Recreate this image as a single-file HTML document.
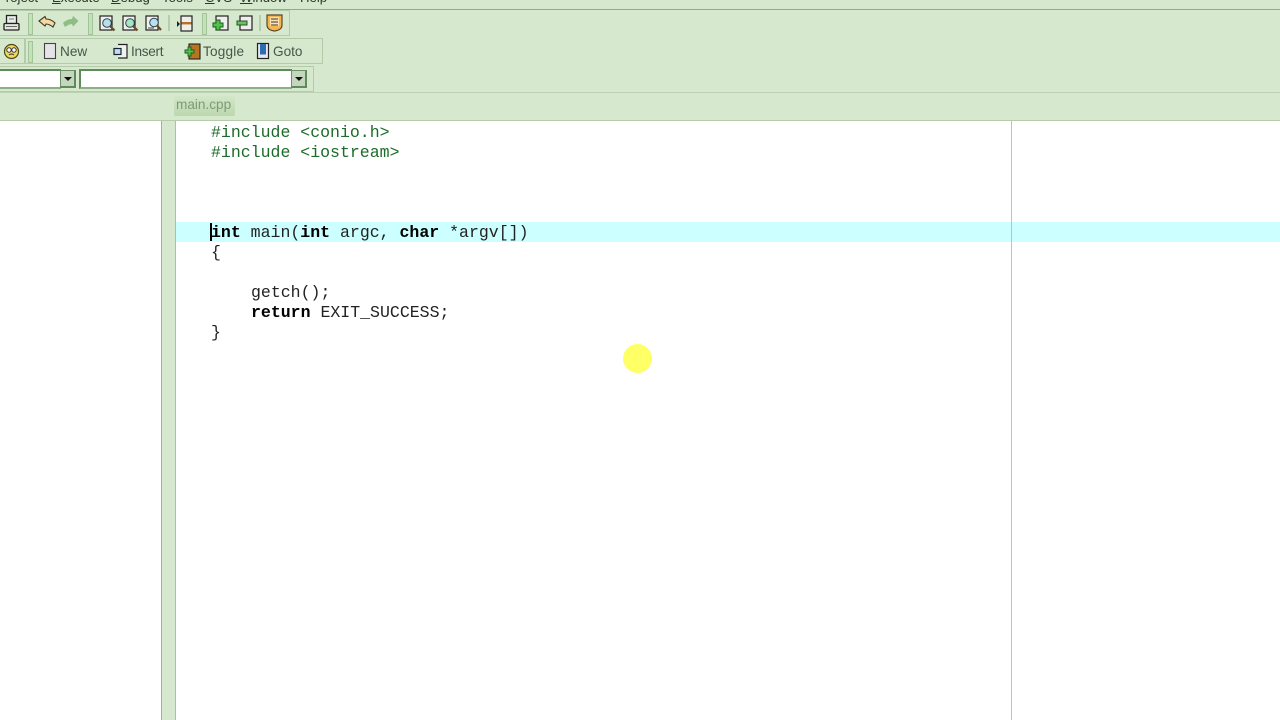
<!DOCTYPE html>
<html>
<head>
<meta charset="utf-8">
<style>
html,body{margin:0;padding:0;width:1280px;height:720px;overflow:hidden;background:#d6e8cd;}
body{position:relative;font-family:"Liberation Sans",sans-serif;}
.a{position:absolute;}
.m{position:absolute;top:-10px;font-size:13.2px;line-height:16px;color:#2c3a2c;white-space:nowrap;filter:blur(.3px);}
.m u{text-decoration:underline;}
.bar{position:absolute;border:1px solid #b3cba9;border-left:none;background:#d6e8cd;box-sizing:border-box;}
.grip{position:absolute;width:3px;background:#c3e3b6;border:1px solid #a3c49a;box-sizing:content-box;}
.sep{position:absolute;width:2px;background:#b3cfa9;}
.t{position:absolute;font-size:13.6px;line-height:16px;color:#47564a;white-space:nowrap;filter:blur(.25px);}
.c{position:absolute;font-family:"Liberation Mono",monospace;font-size:16.55px;line-height:20px;height:20px;color:#222;white-space:pre;filter:blur(.25px);}
.c b{font-weight:bold;color:#000;}
.c.g{color:#1d6b2a;}
svg{position:absolute;overflow:visible;filter:blur(.3px);}
.combo{position:absolute;background:#fff;border:2px solid #5f8a5c;border-right:none;border-bottom:2px solid #8cb086;box-sizing:border-box;}
.drop{position:absolute;width:16px;height:18px;background:#c4d6bb;border:1px solid #6d8f69;border-right:2px solid #5f8a5c;border-bottom:2px solid #5f8a5c;box-sizing:border-box;}
.drop:after{content:"";position:absolute;left:3px;top:6px;border-left:4px solid transparent;border-right:4px solid transparent;border-top:4px solid #111;}
</style>
</head>
<body>
<!-- menu -->
<div class="m" style="left:-3px">Project</div>
<div class="m" style="left:52px"><u>E</u>xecute</div>
<div class="m" style="left:111px"><u>D</u>ebug</div>
<div class="m" style="left:162px">Tools</div>
<div class="m" style="left:205px"><u>C</u>VS</div>
<div class="m" style="left:240px"><u>W</u>indow</div>
<div class="m" style="left:300px">Help</div>
<div class="a" style="left:0;top:9px;width:1280px;height:1px;background:#8fae88"></div>

<!-- toolbar 1 -->
<div class="bar" style="left:0;top:10px;width:290px;height:26px"></div>
<svg style="left:3px;top:14px" width="17" height="18" viewBox="0 0 17 18"><rect x="3.500" y="1.500" width="10" height="8" fill="#e8eee8" stroke="#222" stroke-width="1.300"/><rect x="1" y="9.500" width="15" height="6.500" rx="1" fill="#e6e6e0" stroke="#222" stroke-width="1.300"/><line x1="6" y1="5" x2="11" y2="5" stroke="#777"/><line x1="3" y1="12.500" x2="14" y2="12.500" stroke="#666"/></svg>
<svg style="left:38px;top:15px" width="18" height="14" viewBox="0 0 18 14"><path d="M1 6 L7 1.500 L8 4 Q13 4 17 8 L15 12 Q11 9 8 9 L7 11 Z" fill="#f5d9a0" stroke="#3f3a2a" stroke-width="1.100"/></svg>
<svg style="left:61px;top:15px" width="18" height="14" viewBox="0 0 18 14"><path d="M17.500 6 L12 1 L11 4 Q6 4 2 8 L4 12 Q8 9 11 9 L12 11.500 Z" fill="#8fbd86"/></svg>
<div class="grip" style="left:28px;top:13px;height:20px"></div>
<div class="grip" style="left:88px;top:13px;height:20px"></div>
<svg style="left:99px;top:15px" width="17" height="17" viewBox="0 0 17 17"><rect x="1" y="1" width="12" height="14" fill="#f0f0ec" stroke="#222" stroke-width="1.200"/><circle cx="8" cy="8" r="4.300" fill="#b5e0ec" stroke="#345"/><line x1="11" y1="11" x2="15.500" y2="15.500" stroke="#6b4b2a" stroke-width="2.200"/></svg>
<svg style="left:122px;top:15px" width="17" height="17" viewBox="0 0 17 17"><rect x="1" y="1" width="12" height="14" fill="#f0f0ec" stroke="#222" stroke-width="1.200"/><circle cx="8" cy="8" r="4.300" fill="#a5e6c4" stroke="#345"/><line x1="11" y1="11" x2="15.500" y2="15.500" stroke="#6b4b2a" stroke-width="2.200"/></svg>
<svg style="left:145px;top:15px" width="17" height="17" viewBox="0 0 17 17"><rect x="1" y="1" width="12" height="14" fill="#f0f0ec" stroke="#222" stroke-width="1.200"/><circle cx="9" cy="7.500" r="4.300" fill="#b5e0ec" stroke="#345"/><line x1="12" y1="10.500" x2="16" y2="15" stroke="#6b4b2a" stroke-width="2.200"/><line x1="3" y1="13" x2="9" y2="13" stroke="#444"/></svg>
<div class="sep" style="left:168px;top:15px;height:16px"></div>
<svg style="left:176px;top:15px" width="17" height="17" viewBox="0 0 17 17"><path d="M1 6 L4 9 L1 12Z" fill="#222"/><rect x="5" y="1" width="11" height="15" fill="#eeeeea" stroke="#222" stroke-width="1.200"/><rect x="5.500" y="7" width="10" height="2.400" fill="#b5702a"/></svg>
<div class="grip" style="left:202px;top:13px;height:20px"></div>
<svg style="left:212px;top:15px" width="17" height="17" viewBox="0 0 17 17"><rect x="4" y="1" width="12" height="14" fill="#eee" stroke="#222" stroke-width="1.200"/><path d="M1 8h3V5h4v3h3v4H8v3H4v-3H1z" fill="#4fc24a" stroke="#1f5a1f" stroke-width="1"/></svg>
<svg style="left:236px;top:15px" width="17" height="17" viewBox="0 0 17 17"><rect x="4" y="1" width="12" height="14" fill="#eee" stroke="#222" stroke-width="1.200"/><rect x="1" y="6" width="10" height="4" fill="#6fbf62" stroke="#1f5a1f" stroke-width="1"/></svg>
<div class="sep" style="left:259px;top:15px;height:16px"></div>
<svg style="left:266px;top:14px" width="18" height="18" viewBox="0 0 18 18"><path d="M1 1 H16 V11 Q16 16 8.500 17 Q1 16 1 11 Z" fill="#f6b552" stroke="#5b4a22" stroke-width="1.200"/><rect x="4" y="3" width="9" height="9" fill="#fbe3b0"/><path d="M5 5h7M5 8h7M5 11h7" stroke="#333"/></svg>

<!-- toolbar 2 -->
<div class="bar" style="left:0;top:38px;width:25px;height:26px"></div>
<svg style="left:3px;top:43px" width="17" height="17" viewBox="0 0 17 17"><circle cx="8.500" cy="8.500" r="7" fill="#f0d860" stroke="#4a4a20" stroke-width="1.200"/><circle cx="6" cy="7" r="2.200" fill="#fff" stroke="#333"/><circle cx="11" cy="7" r="2.200" fill="#fff" stroke="#333"/><path d="M6 12q2.500-2 5 0" fill="none" stroke="#333"/></svg>
<div class="bar" style="left:25px;top:38px;width:298px;height:26px;border-left:1px solid #b3cba9"></div>
<div class="grip" style="left:28px;top:41px;height:20px"></div>
<svg style="left:44px;top:43px" width="13" height="17" viewBox="0 0 13 17"><rect x=".5" y=".5" width="11" height="15" fill="#e4e4e8" stroke="#444" stroke-width="1.100"/></svg>
<div class="t" style="left:60px;top:44px">New</div>
<svg style="left:113px;top:44px" width="16" height="16" viewBox="0 0 16 16"><path d="M5 .5H14V14H5" fill="#eef3ee" stroke="#222" stroke-width="1.200"/><rect x="1" y="4.500" width="7" height="6" fill="#c5daee" stroke="#123" stroke-width="1.200"/></svg>
<div class="t" style="left:131px;top:44px;letter-spacing:-.3px">Insert</div>
<svg style="left:184px;top:43px" width="17" height="17" viewBox="0 0 17 17"><rect x="5" y="1" width="11" height="15" fill="#b8741e" stroke="#222" stroke-width="1.100"/><path d="M1 7h3V4h3v3h3v3H7v3H4v-3H1z" fill="#4fc24a" stroke="#1f5a1f" stroke-width=".9"/></svg>
<div class="t" style="left:203px;top:44px;letter-spacing:.2px">Toggle</div>
<svg style="left:257px;top:43px" width="13" height="17" viewBox="0 0 13 17"><rect x=".5" y=".5" width="11" height="15" fill="#e8e8ea" stroke="#222" stroke-width="1.200"/><rect x="3" y="1" width="6" height="10.500" fill="#2a6db5"/></svg>
<div class="t" style="left:273px;top:44px">Goto</div>

<!-- toolbar 3 -->
<div class="bar" style="left:0;top:66px;width:314px;height:26px"></div>
<div class="combo" style="left:-5px;top:69px;width:66px;height:20px"></div>
<div class="drop" style="left:60px;top:70px"></div>
<div class="combo" style="left:79px;top:69px;width:213px;height:20px"></div>
<div class="drop" style="left:291px;top:70px"></div>
<div class="a" style="left:0;top:92px;width:1280px;height:1px;background:#bcd2b2"></div>

<!-- tab -->
<div class="a" style="left:174px;top:96px;width:61px;height:20px;background:linear-gradient(#d3e6c9,#bcd8ae);border-radius:2px"></div>
<div class="t" style="left:176px;top:97px;font-size:13.6px;color:#7d9a78">main.cpp</div>

<!-- panels -->
<div class="a" style="left:0;top:120px;width:1280px;height:1px;background:#b5ccab"></div>
<div class="a" style="left:0;top:121px;width:161px;height:599px;background:#fff"></div>
<div class="a" style="left:161px;top:121px;width:1px;height:599px;background:#9db596"></div>
<div class="a" style="left:175px;top:121px;width:1105px;height:599px;background:#fff"></div>
<div class="a" style="left:175px;top:121px;width:1px;height:599px;background:#a9c2a1"></div>

<!-- editor -->
<div class="a" style="left:176px;top:222px;width:1104px;height:20px;background:#ccffff"></div>
<div class="a" style="left:1011px;top:121px;width:1px;height:599px;background:#c0c0c0"></div>
<div class="a" style="left:210px;top:223px;width:2px;height:18px;background:#000"></div>

<div class="c g" style="left:211px;top:123px">#include &lt;conio.h&gt;</div>
<div class="c g" style="left:211px;top:143px">#include &lt;iostream&gt;</div>
<div class="c" style="left:211px;top:223px"><b>int</b> main(<b>int</b> argc, <b>char</b> *argv[])</div>
<div class="c" style="left:211px;top:243px">{</div>
<div class="c" style="left:251px;top:283px">getch();</div>
<div class="c" style="left:251px;top:303px"><b>return</b> EXIT_SUCCESS;</div>
<div class="c" style="left:211px;top:323px">}</div>

<!-- cursor highlight -->
<div class="a" style="left:623px;top:344px;width:29px;height:29px;border-radius:50%;background:#ffff66"></div>
</body>
</html>
